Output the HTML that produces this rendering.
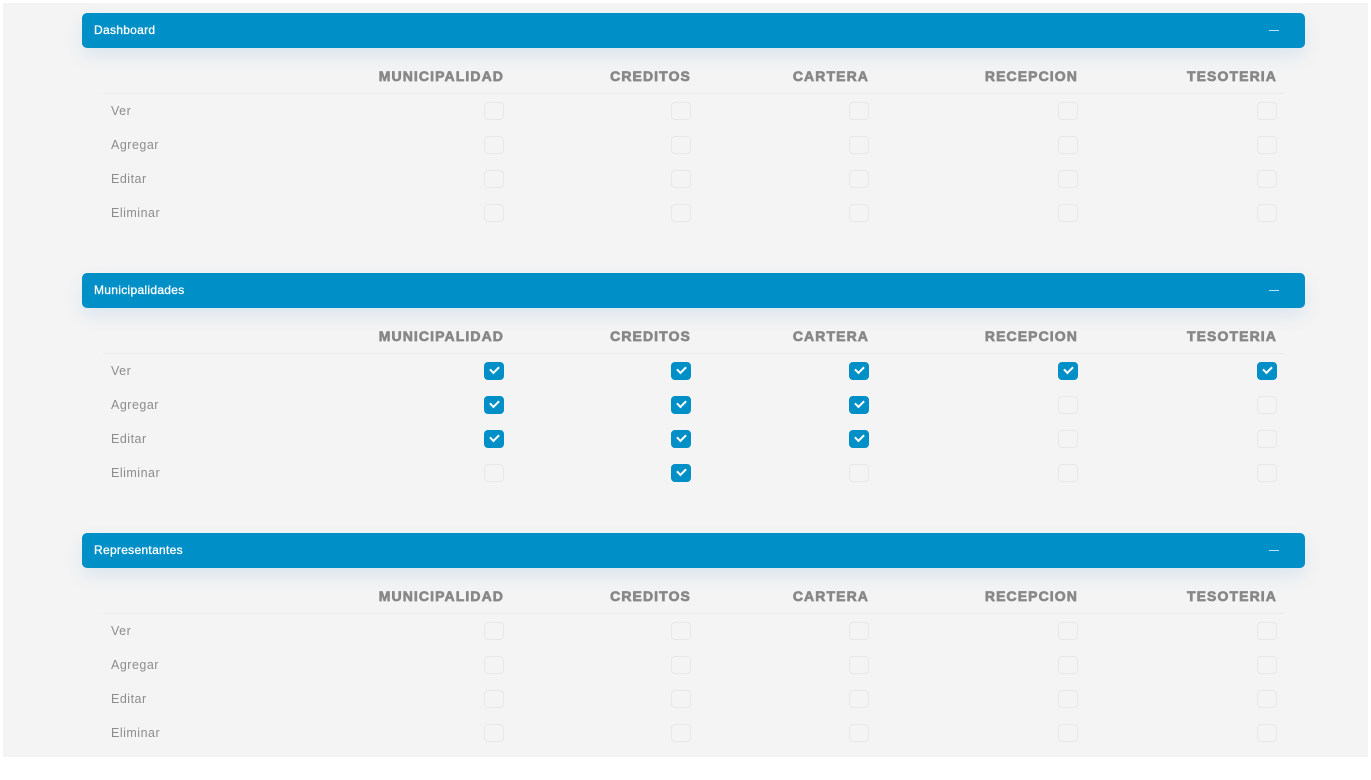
<!DOCTYPE html>
<html><head><meta charset="utf-8"><style>
*{margin:0;padding:0;box-sizing:border-box}
html,body{width:1371px;height:760px;background:#fff;overflow:hidden;font-family:"Liberation Sans",sans-serif}
#pg{position:absolute;left:3px;top:3px;width:1365px;height:754px;background:#f4f4f4}
.sec{position:absolute;left:0;width:1371px;height:260px}
.bar{position:absolute;left:82px;top:13px;width:1223px;height:35px;background:#008fc7;border-radius:5px;box-shadow:0 8px 18px rgba(0,110,200,0.10);color:#fff;font-size:12px;line-height:35px;padding-left:12px;letter-spacing:.3px;-webkit-text-stroke:.3px #fff}
.bar i{position:absolute;right:26px;top:17px;width:10px;height:1px;background:#bfe3f2}
.h{position:absolute;top:68px;font-size:14px;font-weight:bold;color:#888;letter-spacing:1.1px;-webkit-text-stroke:.7px #888;text-align:right;width:200px}
.ln{position:absolute;left:103px;top:93px;width:1182px;height:1px;background:#ebebeb}
.l{position:absolute;left:111px;font-size:12.5px;color:#8c8c8c;letter-spacing:.5px}
.c{position:absolute;width:20px;height:18px;border:1px solid #e8e8e8;border-radius:4px;background:#f4f4f4}
.k{background:#008fc7;border-color:#008fc7}
.k::after{content:"";position:absolute;left:5px;top:3px;width:7px;height:4px;border-left:2px solid #fff;border-bottom:2px solid #fff;transform:rotate(-45deg)}
</style></head><body><div id="pg"></div>

<div class="sec" style="top:0">
<div class="bar">Dashboard<i></i></div>
<div class="h" style="left:304px">MUNICIPALIDAD</div><div class="h" style="left:491px">CREDITOS</div><div class="h" style="left:669px">CARTERA</div><div class="h" style="left:878px">RECEPCION</div><div class="h" style="left:1077px">TESOTERIA</div>
<div class="ln"></div>
<div class="l" style="top:104px">Ver</div><div class="l" style="top:138px">Agregar</div><div class="l" style="top:172px">Editar</div><div class="l" style="top:206px">Eliminar</div>
<div class="c" style="left:484px;top:102px"></div><div class="c" style="left:671px;top:102px"></div><div class="c" style="left:849px;top:102px"></div><div class="c" style="left:1058px;top:102px"></div><div class="c" style="left:1257px;top:102px"></div>
<div class="c" style="left:484px;top:136px"></div><div class="c" style="left:671px;top:136px"></div><div class="c" style="left:849px;top:136px"></div><div class="c" style="left:1058px;top:136px"></div><div class="c" style="left:1257px;top:136px"></div>
<div class="c" style="left:484px;top:170px"></div><div class="c" style="left:671px;top:170px"></div><div class="c" style="left:849px;top:170px"></div><div class="c" style="left:1058px;top:170px"></div><div class="c" style="left:1257px;top:170px"></div>
<div class="c" style="left:484px;top:204px"></div><div class="c" style="left:671px;top:204px"></div><div class="c" style="left:849px;top:204px"></div><div class="c" style="left:1058px;top:204px"></div><div class="c" style="left:1257px;top:204px"></div>
</div>

<div class="sec" style="top:260px">
<div class="bar">Municipalidades<i></i></div>
<div class="h" style="left:304px">MUNICIPALIDAD</div><div class="h" style="left:491px">CREDITOS</div><div class="h" style="left:669px">CARTERA</div><div class="h" style="left:878px">RECEPCION</div><div class="h" style="left:1077px">TESOTERIA</div>
<div class="ln"></div>
<div class="l" style="top:104px">Ver</div><div class="l" style="top:138px">Agregar</div><div class="l" style="top:172px">Editar</div><div class="l" style="top:206px">Eliminar</div>
<div class="c k" style="left:484px;top:102px"></div><div class="c k" style="left:671px;top:102px"></div><div class="c k" style="left:849px;top:102px"></div><div class="c k" style="left:1058px;top:102px"></div><div class="c k" style="left:1257px;top:102px"></div>
<div class="c k" style="left:484px;top:136px"></div><div class="c k" style="left:671px;top:136px"></div><div class="c k" style="left:849px;top:136px"></div><div class="c" style="left:1058px;top:136px"></div><div class="c" style="left:1257px;top:136px"></div>
<div class="c k" style="left:484px;top:170px"></div><div class="c k" style="left:671px;top:170px"></div><div class="c k" style="left:849px;top:170px"></div><div class="c" style="left:1058px;top:170px"></div><div class="c" style="left:1257px;top:170px"></div>
<div class="c" style="left:484px;top:204px"></div><div class="c k" style="left:671px;top:204px"></div><div class="c" style="left:849px;top:204px"></div><div class="c" style="left:1058px;top:204px"></div><div class="c" style="left:1257px;top:204px"></div>
</div>

<div class="sec" style="top:520px">
<div class="bar">Representantes<i></i></div>
<div class="h" style="left:304px">MUNICIPALIDAD</div><div class="h" style="left:491px">CREDITOS</div><div class="h" style="left:669px">CARTERA</div><div class="h" style="left:878px">RECEPCION</div><div class="h" style="left:1077px">TESOTERIA</div>
<div class="ln"></div>
<div class="l" style="top:104px">Ver</div><div class="l" style="top:138px">Agregar</div><div class="l" style="top:172px">Editar</div><div class="l" style="top:206px">Eliminar</div>
<div class="c" style="left:484px;top:102px"></div><div class="c" style="left:671px;top:102px"></div><div class="c" style="left:849px;top:102px"></div><div class="c" style="left:1058px;top:102px"></div><div class="c" style="left:1257px;top:102px"></div>
<div class="c" style="left:484px;top:136px"></div><div class="c" style="left:671px;top:136px"></div><div class="c" style="left:849px;top:136px"></div><div class="c" style="left:1058px;top:136px"></div><div class="c" style="left:1257px;top:136px"></div>
<div class="c" style="left:484px;top:170px"></div><div class="c" style="left:671px;top:170px"></div><div class="c" style="left:849px;top:170px"></div><div class="c" style="left:1058px;top:170px"></div><div class="c" style="left:1257px;top:170px"></div>
<div class="c" style="left:484px;top:204px"></div><div class="c" style="left:671px;top:204px"></div><div class="c" style="left:849px;top:204px"></div><div class="c" style="left:1058px;top:204px"></div><div class="c" style="left:1257px;top:204px"></div>
</div>
</body></html>
